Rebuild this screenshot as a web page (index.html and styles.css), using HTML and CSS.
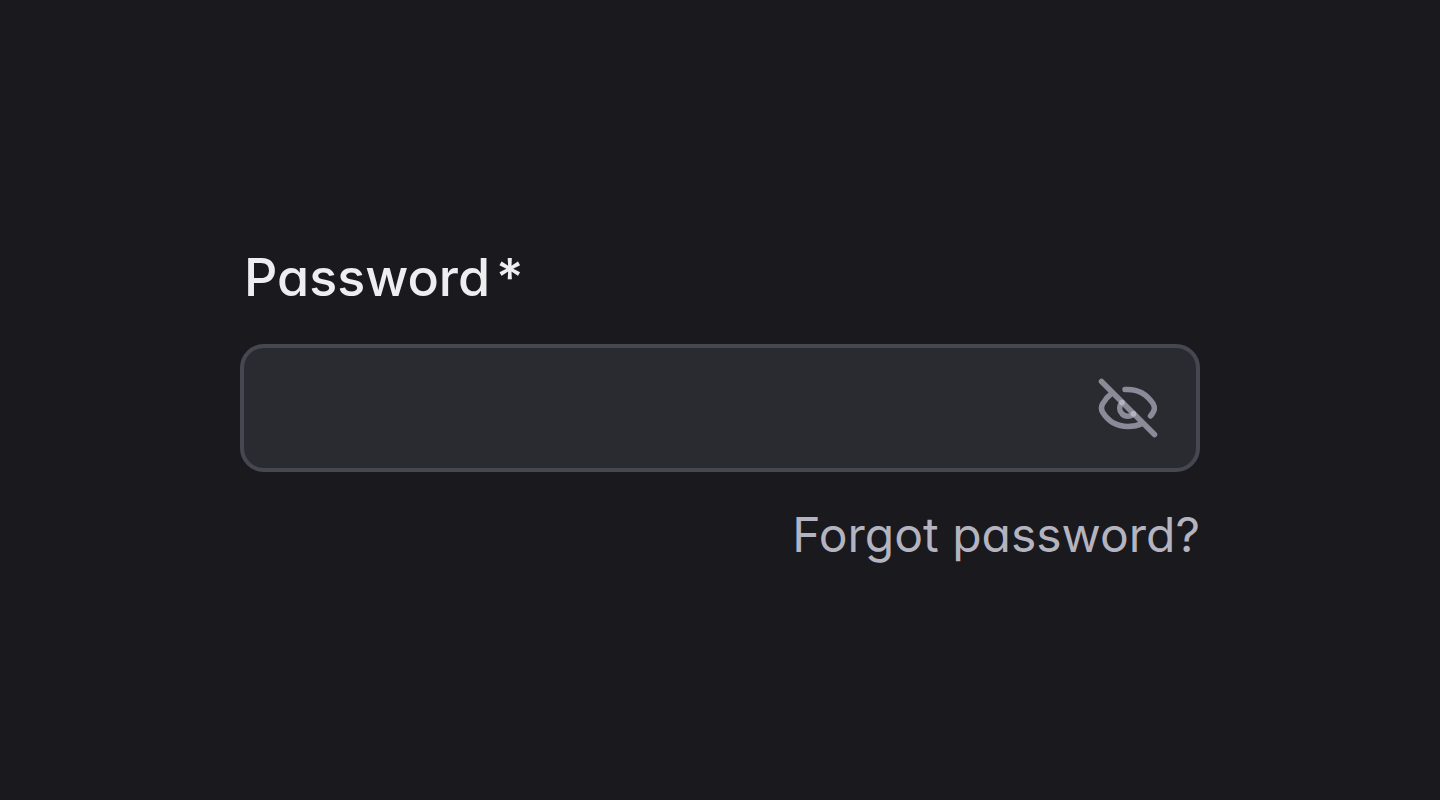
FILE: index.html
```html
<!DOCTYPE html>
<html lang="en">
<head>
<meta charset="utf-8">
<meta name="viewport" content="width=device-width, initial-scale=1">
<title>Password</title>
<link rel="stylesheet" href="styles.css">
</head>
<body>
<form class="field">
  <label class="label" for="password">Password<span class="required">*</span></label>
  <div class="control">
    <input class="input" id="password" name="password" type="password" required>
    <button class="toggle" type="button" aria-label="Show password">
      <svg class="icon" viewBox="0 0 64 64" aria-hidden="true">
        <path d="M29 13.5C43 12.5 52 20 57 27.5C59 31 59.500 34 54.500 40"/>
        <path d="M15.500 17.500C11.500 20.500 8.500 24.500 6.500 28C5 30.800 5 33.200 6.500 36C12 45 21 50.500 32 50.500C37.500 50.500 42 49.500 46 47.500"/>
        <path d="M26.300 26.500C22.800 30 23 34.500 26 37.700C29.300 41 34.200 41 37.500 37.700"/>
        <path d="M5.500 5.500L58.500 58.500"/>
        <circle class="overlap" cx="26" cy="26.600" r="2.900"/>
        <circle class="overlap" cx="37.400" cy="37.800" r="2.900"/>
      </svg>
    </button>
  </div>
  <a class="forgot" href="#">Forgot password?</a>
</form>
</body>
</html>
```
FILE: styles.css
```css
* {
  box-sizing: border-box;
}

body {
  margin: 0;
  min-height: 100vh;
  display: grid;
  place-items: center;
  background: #1a191e;
  font-family: Inter, "Liberation Sans", sans-serif;
  font-feature-settings: "cv11";
}

.field {
  width: 100%;
  max-width: 960px;
  display: flex;
  flex-direction: column;
}

.label {
  display: flex;
  gap: 6px;
  padding-left: 4px;
  margin-bottom: 28px;
  color: #eeeef0;
  font-size: 52px;
  font-weight: 500;
  line-height: 76px;
}

.control {
  display: flex;
  align-items: center;
  height: 128px;
  padding-right: 36px;
  border: 4px solid #464851;
  border-radius: 24px;
  background: #2a2b30;
}

.input {
  flex: 1;
  min-width: 0;
  height: 100%;
  padding: 0 32px;
  border: 0;
  outline: 0;
  background: transparent;
  color: #eeeef0;
  font: inherit;
  font-size: 48px;
}

.toggle {
  display: flex;
  padding: 0;
  border: 0;
  background: transparent;
  color: #8a8a98;
  cursor: pointer;
}

.icon {
  width: 64px;
  height: 64px;
  fill: none;
  stroke: currentColor;
  stroke-width: 5.5;
  stroke-linecap: round;
  stroke-linejoin: round;
}

.overlap {
  fill: #b4b3c0;
  stroke: none;
}

.forgot {
  align-self: flex-end;
  margin-top: 38px;
  color: #b4b3c0;
  font-size: 48px;
  line-height: 50px;
  text-decoration: none;
}
```
